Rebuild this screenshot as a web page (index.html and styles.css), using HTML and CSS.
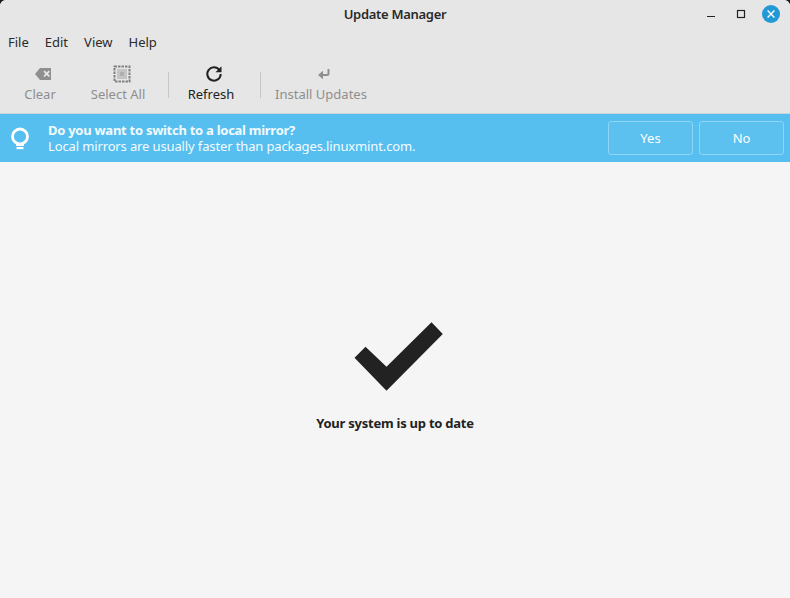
FILE: index.html
```html
<!DOCTYPE html>
<html lang="en">
<head>
<meta charset="utf-8">
<title>Update Manager</title>
<link rel="stylesheet" href="styles.css">
</head>
<body>
<div class="window">
  <header class="titlebar">
    <div class="title">Update Manager</div>
    <div class="controls">
      <svg class="ctl ctl-min" width="12" height="12" viewBox="0 0 12 12"><rect x="2" y="8" width="8" height="1" fill="#222"/></svg>
      <svg class="ctl ctl-max" width="12" height="12" viewBox="0 0 12 12"><rect x="2.500" y="2.500" width="7" height="7" fill="none" stroke="#222" stroke-width="1.200"/></svg>
      <svg class="close" width="18" height="18" viewBox="0 0 18 18"><circle cx="9" cy="9" r="9" fill="#2299d6"/><path d="M5.600 5.600l6.800 6.800M12.400 5.600l-6.800 6.800" stroke="#fff" stroke-width="1.400" fill="none"/></svg>
    </div>
  </header>
  <nav class="menubar">
    <span class="menu">File</span>
    <span class="menu">Edit</span>
    <span class="menu">View</span>
    <span class="menu">Help</span>
  </nav>
  <div class="toolbar">
    <div class="tool dim tool-clear">
      <svg class="icon-clear" width="18" height="14" viewBox="0 0 18 14"><path fill-rule="evenodd" fill="#8f8f8f" d="M6 1h11v12H6L1 7zM9.500 4.700L11.300 6.800 9.500 8.900 10.700 10 12.700 8 14.700 10 15.900 8.900 14 6.800 15.900 4.700 14.700 3.600 12.700 5.600 10.700 3.600z"/></svg>
      <span>Clear</span>
    </div>
    <div class="tool dim tool-select">
      <svg class="icon-select" width="18" height="18" viewBox="0 0 18 18"><rect x="1.500" y="1.500" width="15" height="15" fill="none" stroke="#808080" stroke-width="2" stroke-dasharray="2.500 1"/><rect x="4" y="4" width="10" height="10" fill="#c4c4c4"/><rect x="7" y="7" width="4" height="4" fill="#b0b0b0"/></svg>
      <span>Select All</span>
    </div>
    <div class="sep"></div>
    <div class="tool tool-refresh">
      <svg class="icon-refresh" width="18" height="18" viewBox="0 0 18 18"><path d="M14.600 5.300A6.700 6.700 0 1 0 15.700 9" fill="none" stroke="#222" stroke-width="2"/><path d="M16.500 1.200v6h-6z" fill="#222"/></svg>
      <span>Refresh</span>
    </div>
    <div class="sep"></div>
    <div class="tool dim tool-install">
      <svg class="icon-install" width="14" height="14" viewBox="0 0 14 14"><path d="M11.500 2v4.500a1.500 1.500 0 0 1-1.500 1.500H3.500" fill="none" stroke="#8f8f8f" stroke-width="2"/><path d="M6 3.700v8.600L1 8z" fill="#8f8f8f"/></svg>
      <span>Install Updates</span>
    </div>
  </div>
  <div class="infobar">
    <svg class="bulb" width="20" height="26" viewBox="0 0 20 26"><circle cx="10" cy="11.500" r="7.500" fill="none" stroke="#fff" stroke-width="2.800"/><path d="M6 18.500h8v2.500h-8z" fill="#fff"/><rect x="6.500" y="22" width="7" height="2.200" fill="#fff"/></svg>
    <div class="message">
      <div class="msg-title">Do you want to switch to a local mirror?</div>
      <div class="msg-body">Local mirrors are usually faster than packages.linuxmint.com.</div>
    </div>
    <div class="actions">
      <button class="btn">Yes</button>
      <button class="btn">No</button>
    </div>
  </div>
  <main class="content">
    <svg class="check" width="90" height="70" viewBox="0 0 90 70"><path d="M0.500 35.700L11.500 24.700 32.500 44.700 77.500 0.300 88.800 12 32.500 68.700z" fill="#222"/></svg>
    <div class="status">Your system is up to date</div>
  </main>
</div>
</body>
</html>
```
FILE: styles.css
```css
* { box-sizing: border-box; }
html, body { margin: 0; padding: 0; background: #1a1a1a; }
body { width: 790px; height: 598px; overflow: hidden; }
.window {
  width: 790px; height: 598px;
  display: flex; flex-direction: column;
  background: #f5f5f5;
  border-radius: 6px 6px 0 0;
  overflow: hidden;
  font-family: "Noto Sans", "Open Sans", sans-serif;
  font-size: 13px;
  color: #222;
}
.titlebar {
  height: 28px; flex: none;
  background: #e6e6e6;
  display: flex; align-items: center; justify-content: center;
  position: relative;
}
.title { font-weight: 600; font-size: 13px; letter-spacing: -0.3px; color: #2a2a2a; }
.controls { position: absolute; right: 10px; top: 5px; display: flex; align-items: center; }
.ctl-min { margin-right: 18px; }
.ctl-max { margin-right: 15px; }
.menubar {
  height: 28px; flex: none;
  background: #e6e6e6;
  display: flex; align-items: center;
  padding-left: 8px; gap: 16px;
}
.menu { font-size: 13px; color: #2a2a2a; }
.toolbar {
  height: 58px; flex: none;
  background: #e6e6e6;
  border-bottom: 1px solid #c9d3da;
  display: flex; align-items: flex-start;
  padding-top: 9px;
}
.tool {
  display: flex; flex-direction: column; align-items: center;
  height: 40px;
  font-size: 13px;
  color: #222;
}
.tool svg { height: 18px; margin-bottom: 2px; flex: none; }
.icon-clear { margin-left: 6px; }
.icon-select { margin-left: 7px; }
.icon-refresh { margin-left: 5px; }
.icon-install { margin-left: 6px; }
.dim { color: #8e8e8e; }
.tool-clear { width: 32px; margin-left: 24px; }
.tool-select { width: 56px; margin-left: 34px; }
.tool-refresh { width: 46px; margin-left: 19px; }
.tool-install { width: 92px; margin-left: 14px; }
.sep { width: 1px; height: 26px; margin: 7px 0 0 22px; background: #c6c6c6; flex: none; }
.tool-refresh + .sep { margin-left: 26px; }
.infobar {
  height: 48px; flex: none;
  background: #56bfef;
  display: flex; align-items: center;
  color: #fff;
  padding: 0 6px 0 10px;
}
.bulb { flex: none; }
.message { margin-left: 18px; flex: 1; line-height: 16px; color: #f3fbff; }
.msg-title { font-weight: 700; font-size: 13px; letter-spacing: -0.27px; }
.msg-body { font-size: 13px; letter-spacing: -0.13px; }
.actions { display: flex; gap: 6px; }
.btn {
  width: 85px; height: 34px;
  background: #5cc1ef;
  border: 1px solid #8fd5f5;
  border-radius: 3px;
  color: #fff;
  font: inherit;
  padding: 0;
}
.content {
  flex: 1;
  display: flex; flex-direction: column; align-items: center;
  padding-top: 160px;
  background: #f5f5f5;
}
.check { display: block; margin-left: 7px; }
.status { font-weight: 700; font-size: 13px; letter-spacing: -0.24px; margin-top: 22px; color: #222; }
```
